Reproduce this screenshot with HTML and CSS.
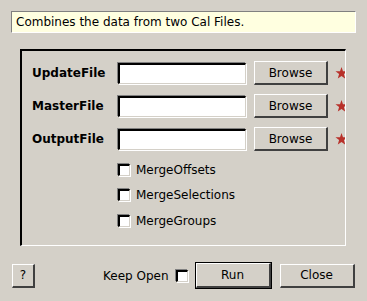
FILE: index.html
```html
<!DOCTYPE html>
<html lang="en">
<head>
    <meta charset="UTF-8">
    <title>Merge Cal Files</title>
    <link rel="stylesheet" href="styles.css">
</head>
<body>
    <div class="dialog">
        <div class="info">Combines the data from two Cal Files.</div>

        <div class="frame">
            <div class="file-grid">
                <label class="file-label">UpdateFile</label>
                <input type="text" class="entry">
                <button class="btn browse">Browse</button>
                <span class="star"><svg width="16" height="16" viewBox="0 0 14 14"><path d="M7 0.5 L8.6 5 L13.5 5.2 L9.6 8.2 L11 13 L7 10.2 L3 13 L4.4 8.2 L0.5 5.2 L5.4 5 Z" fill="#b8312a"/></svg></span>

                <label class="file-label">MasterFile</label>
                <input type="text" class="entry">
                <button class="btn browse">Browse</button>
                <span class="star"><svg width="16" height="16" viewBox="0 0 14 14"><path d="M7 0.5 L8.6 5 L13.5 5.2 L9.6 8.2 L11 13 L7 10.2 L3 13 L4.4 8.2 L0.5 5.2 L5.4 5 Z" fill="#b8312a"/></svg></span>

                <label class="file-label">OutputFile</label>
                <input type="text" class="entry">
                <button class="btn browse">Browse</button>
                <span class="star"><svg width="16" height="16" viewBox="0 0 14 14"><path d="M7 0.5 L8.6 5 L13.5 5.2 L9.6 8.2 L11 13 L7 10.2 L3 13 L4.4 8.2 L0.5 5.2 L5.4 5 Z" fill="#b8312a"/></svg></span>
            </div>

            <div class="options">
                <label class="check-row"><span class="check"></span>MergeOffsets</label>
                <label class="check-row"><span class="check"></span>MergeSelections</label>
                <label class="check-row"><span class="check"></span>MergeGroups</label>
            </div>
        </div>

        <div class="footer">
            <button class="btn help">?</button>
            <div class="keep-open">Keep Open <span class="check"></span></div>
            <div class="default-ring"><button class="btn action">Run</button></div>
            <button class="btn action close">Close</button>
        </div>
    </div>
</body>
</html>
```

FILE: styles.css
```css
* {
    box-sizing: border-box;
    margin: 0;
    padding: 0;
}

body {
    background: #d4d0c8;
    font-family: "DejaVu Sans", sans-serif;
    font-size: 12px;
    color: #000;
    width: 367px;
    height: 301px;
    overflow: hidden;
}

.dialog {
    padding: 11px 11px 0 11px;
}

.info {
    height: 22px;
    width: 345px;
    background: #ffffe0;
    border-top: 1px solid #808080;
    border-left: 1px solid #808080;
    border-right: 1px solid #fff;
    border-bottom: 1px solid #fff;
    padding: 3px 0 0 4px;
    line-height: 15px;
}

.frame {
    margin: 16px 0 0 9px;
    width: 326px;
    height: 197px;
    border-top: 2px solid #000;
    border-left: 2px solid #000;
    border-right: 1px solid #fff;
    border-bottom: 1px solid #fff;
    overflow: hidden;
    padding: 10px 0 0 10px;
}

.file-grid {
    display: grid;
    grid-template-columns: 80px 128px 74px 16px;
    column-gap: 6px;
    row-gap: 9px;
    align-items: center;
}

.file-grid .browse {
    margin-left: 2px;
}

.file-label {
    font-weight: bold;
    white-space: nowrap;
}

.entry {
    height: 21px;
    width: 128px;
    background: #fff;
    border-top: 2px solid #000;
    border-left: 2px solid #000;
    border-right: 1px solid #d4d0c8;
    border-bottom: 1px solid #d4d0c8;
    box-shadow: -1px -1px 0 #808080, 1px 1px 0 #fff;
    outline: none;
}

.btn {
    font-family: "DejaVu Sans", sans-serif;
    font-size: 12px;
    color: #000;
    background: #d4d0c8;
    border-top: 1px solid #fff;
    border-left: 1px solid #fff;
    border-right: 2px solid #404040;
    border-bottom: 2px solid #404040;
    height: 24px;
}

.browse {
    width: 74px;
}

.star {
    display: flex;
    margin-left: 3px;
}

.options {
    display: flex;
    flex-direction: column;
    margin: 6px 0 0 86px;
}

.check-row {
    display: flex;
    align-items: center;
    height: 25.5px;
    gap: 6px;
}

.check {
    display: inline-block;
    width: 12px;
    height: 12px;
    background: #fff;
    border-top: 2px solid #000;
    border-left: 2px solid #000;
    border-right: 1px solid #d4d0c8;
    border-bottom: 1px solid #d4d0c8;
    box-shadow: -1px -1px 0 #808080, 1px 1px 0 #fff;
}

.footer {
    display: flex;
    align-items: center;
    margin-top: 16px;
}

.help {
    width: 23px;
    height: 24px;
    margin-left: 1px;
}

.keep-open {
    display: flex;
    align-items: center;
    gap: 7px;
    margin-left: 68px;
}

.default-ring {
    margin-left: 7px;
    border: 1px solid #000;
    display: flex;
}

.action {
    width: 75px;
    height: 25px;
}

.close {
    margin-left: 8px;
    height: 24px;
}
```
